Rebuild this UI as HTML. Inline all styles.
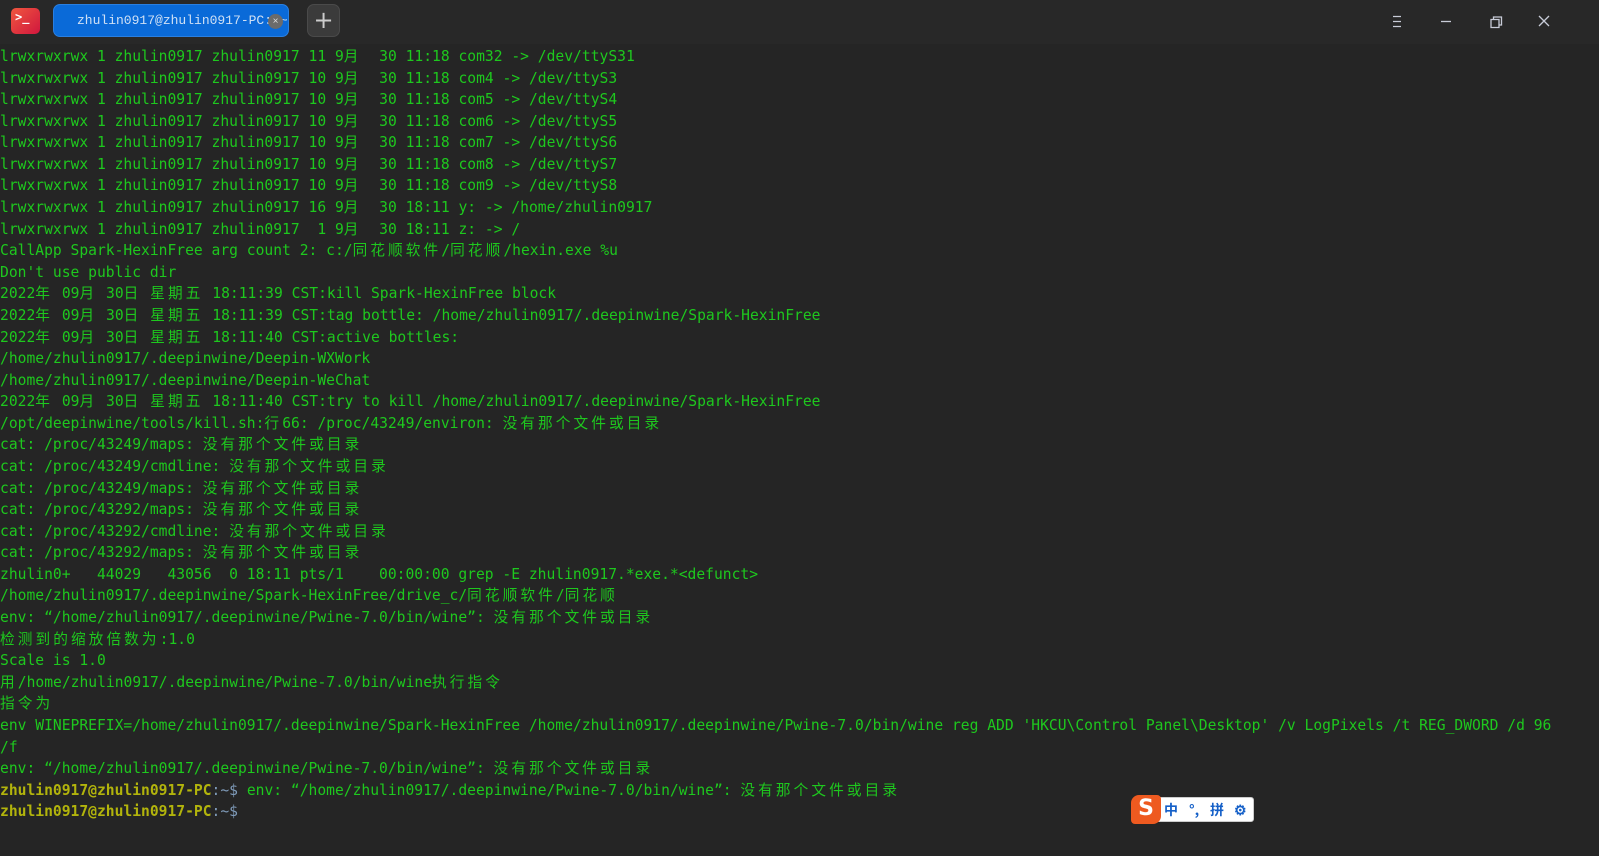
<!DOCTYPE html>
<html><head><meta charset="utf-8"><style>
html,body{margin:0;padding:0;width:1599px;height:856px;background:#252525;overflow:hidden}
.tb{position:absolute;left:0;top:0;width:1599px;height:44px;background:#282828}
.logo{position:absolute;left:11px;top:8px;width:29px;height:26px;border-radius:5px;background:linear-gradient(135deg,#f0573f,#d0163e);color:#fff;font:bold 12px "DejaVu Sans Mono",monospace;line-height:18px;padding-left:4px;box-sizing:border-box}
.tab{position:absolute;left:53px;top:4px;width:236px;height:33px;border-radius:7px;background:#0a6ad8;border:1px solid #2a7fe0;box-sizing:border-box;color:#cfe0f5;font:13px "Liberation Mono",monospace;line-height:31px;padding-left:23px;white-space:nowrap;overflow:hidden}
.x{position:absolute;left:268px;top:14px;width:15px;height:15px;border-radius:50%;background:#6b6b6b;color:#ddd;font:10px sans-serif;text-align:center;line-height:15px}
.plus{position:absolute;left:307px;top:4px;width:33px;height:33px;border-radius:7px;background:#3b3b3b;border:1px solid #4a4a4a;box-sizing:border-box;color:#ccc;font:24px "DejaVu Sans",sans-serif;text-align:center;line-height:30px}
.term{position:absolute;left:0;top:46px;margin:0;font-family:"DejaVu Sans Mono","Noto Sans CJK SC",monospace;font-size:14.65px;line-height:21.58px;color:#1ec81e;white-space:pre}
.c{letter-spacing:3.1px}
.p{color:#b2b40c;font-weight:bold}.q{color:#7e9ab8}
.ime{position:absolute;left:1147px;top:797px;width:107px;height:25px;background:#fff;border-radius:3px;border:1px solid #ccc;box-sizing:border-box;color:#1560c8;font:bold 14px "Noto Sans CJK SC",sans-serif;line-height:24px}
.s{position:absolute;left:1131px;top:795px;width:30px;height:29px;background:#ee5a20;border-radius:8px 4px 8px 4px;color:#fff;font:bold 22px "DejaVu Sans",sans-serif;text-align:center;line-height:28px}
</style></head><body>
<div class="tb">
<div class="logo">&gt;_</div>
<div class="tab">zhulin0917@zhulin0917-PC: ~</div><div class="x">×</div>
<div class="plus">+</div>
<svg style="position:absolute;left:1388px;top:12px" width="200" height="20" fill="none" stroke="#c8ccd8" stroke-width="1.3">
<path d="M5 4.5h8M5 9.5h8M5 14.5h8"/><path d="M53 9.5h10"/><path d="M103 7.5h8v8h-8zM105.5 7.5V5h8v8H111"/><path d="M151 4l10 10M161 4l-10 10"/></svg>
</div>
<pre class="term">lrwxrwxrwx 1 zhulin0917 zhulin0917 11 9<span class="c">月</span>  30 11:18 com32 -&gt; /dev/ttyS31
lrwxrwxrwx 1 zhulin0917 zhulin0917 10 9<span class="c">月</span>  30 11:18 com4 -&gt; /dev/ttyS3
lrwxrwxrwx 1 zhulin0917 zhulin0917 10 9<span class="c">月</span>  30 11:18 com5 -&gt; /dev/ttyS4
lrwxrwxrwx 1 zhulin0917 zhulin0917 10 9<span class="c">月</span>  30 11:18 com6 -&gt; /dev/ttyS5
lrwxrwxrwx 1 zhulin0917 zhulin0917 10 9<span class="c">月</span>  30 11:18 com7 -&gt; /dev/ttyS6
lrwxrwxrwx 1 zhulin0917 zhulin0917 10 9<span class="c">月</span>  30 11:18 com8 -&gt; /dev/ttyS7
lrwxrwxrwx 1 zhulin0917 zhulin0917 10 9<span class="c">月</span>  30 11:18 com9 -&gt; /dev/ttyS8
lrwxrwxrwx 1 zhulin0917 zhulin0917 16 9<span class="c">月</span>  30 18:11 y: -&gt; /home/zhulin0917
lrwxrwxrwx 1 zhulin0917 zhulin0917  1 9<span class="c">月</span>  30 18:11 z: -&gt; /
CallApp Spark-HexinFree arg count 2: c:/<span class="c">同花顺软件</span>/<span class="c">同花顺</span>/hexin.exe %u
Don't use public dir
2022<span class="c">年</span> 09<span class="c">月</span> 30<span class="c">日</span> <span class="c">星期五</span> 18:11:39 CST:kill Spark-HexinFree block
2022<span class="c">年</span> 09<span class="c">月</span> 30<span class="c">日</span> <span class="c">星期五</span> 18:11:39 CST:tag bottle: /home/zhulin0917/.deepinwine/Spark-HexinFree
2022<span class="c">年</span> 09<span class="c">月</span> 30<span class="c">日</span> <span class="c">星期五</span> 18:11:40 CST:active bottles:
/home/zhulin0917/.deepinwine/Deepin-WXWork
/home/zhulin0917/.deepinwine/Deepin-WeChat
2022<span class="c">年</span> 09<span class="c">月</span> 30<span class="c">日</span> <span class="c">星期五</span> 18:11:40 CST:try to kill /home/zhulin0917/.deepinwine/Spark-HexinFree
/opt/deepinwine/tools/kill.sh:<span class="c">行</span>66: /proc/43249/environ: <span class="c">没有那个文件或目录</span>
cat: /proc/43249/maps: <span class="c">没有那个文件或目录</span>
cat: /proc/43249/cmdline: <span class="c">没有那个文件或目录</span>
cat: /proc/43249/maps: <span class="c">没有那个文件或目录</span>
cat: /proc/43292/maps: <span class="c">没有那个文件或目录</span>
cat: /proc/43292/cmdline: <span class="c">没有那个文件或目录</span>
cat: /proc/43292/maps: <span class="c">没有那个文件或目录</span>
zhulin0+   44029   43056  0 18:11 pts/1    00:00:00 grep -E zhulin0917.*exe.*&lt;defunct&gt;
/home/zhulin0917/.deepinwine/Spark-HexinFree/drive_c/<span class="c">同花顺软件</span>/<span class="c">同花顺</span>
env: “/home/zhulin0917/.deepinwine/Pwine-7.0/bin/wine”: <span class="c">没有那个文件或目录</span>
<span class="c">检测到的缩放倍数为</span>:1.0
Scale is 1.0
<span class="c">用</span>/home/zhulin0917/.deepinwine/Pwine-7.0/bin/wine<span class="c">执行指令</span>
<span class="c">指令为</span>
env WINEPREFIX=/home/zhulin0917/.deepinwine/Spark-HexinFree /home/zhulin0917/.deepinwine/Pwine-7.0/bin/wine reg ADD 'HKCU\Control Panel\Desktop' /v LogPixels /t REG_DWORD /d 96
/f
env: “/home/zhulin0917/.deepinwine/Pwine-7.0/bin/wine”: <span class="c">没有那个文件或目录</span>
<span class="p">zhulin0917@zhulin0917-PC</span><span class="q">:~$</span> env: “/home/zhulin0917/.deepinwine/Pwine-7.0/bin/wine”: <span class="c">没有那个文件或目录</span>
<span class="p">zhulin0917@zhulin0917-PC</span><span class="q">:~$</span></pre>
<div class="ime"><span style="position:absolute;left:16px">中</span><span style="position:absolute;left:41px">°,</span><span style="position:absolute;left:62px">拼</span><span style="position:absolute;left:86px">⚙</span></div>
<div class="s">S</div>
</body></html>
